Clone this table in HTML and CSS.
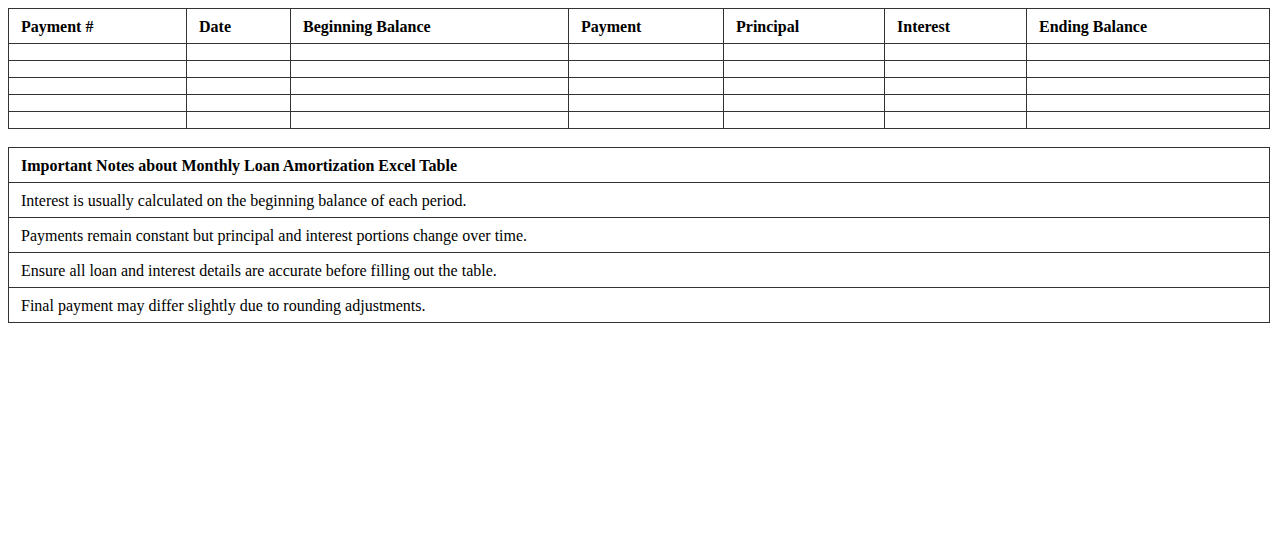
FILE: index.html
```html
<!DOCTYPE html>
<html>
<head>
<meta charset="utf-8">
<link rel="stylesheet" href="styles.css">
</head>
<body>
<table class="grid amort">
  <colgroup>
    <col class="c1"><col class="c2"><col class="c3"><col class="c4"><col class="c5"><col class="c6"><col class="c7">
  </colgroup>
  <thead>
    <tr><th>Payment #</th><th>Date</th><th>Beginning Balance</th><th>Payment</th><th>Principal</th><th>Interest</th><th>Ending Balance</th></tr>
  </thead>
  <tbody>
    <tr><td></td><td></td><td></td><td></td><td></td><td></td><td></td></tr>
    <tr><td></td><td></td><td></td><td></td><td></td><td></td><td></td></tr>
    <tr><td></td><td></td><td></td><td></td><td></td><td></td><td></td></tr>
    <tr><td></td><td></td><td></td><td></td><td></td><td></td><td></td></tr>
    <tr><td></td><td></td><td></td><td></td><td></td><td></td><td></td></tr>
  </tbody>
</table>
<table class="grid notes">
  <thead>
    <tr><th>Important Notes about Monthly Loan Amortization Excel Table</th></tr>
  </thead>
  <tbody>
    <tr><td>Interest is usually calculated on the beginning balance of each period.</td></tr>
    <tr><td>Payments remain constant but principal and interest portions change over time.</td></tr>
    <tr><td>Ensure all loan and interest details are accurate before filling out the table.</td></tr>
    <tr><td>Final payment may differ slightly due to rounding adjustments.</td></tr>
  </tbody>
</table>
</body>
</html>
```
FILE: styles.css
```css
body {
  margin: 8px;
  font-family: "Liberation Serif", "Times New Roman", serif;
  font-size: 16px;
  color: #000;
  background: #fff;
}
.grid {
  width: 1262px;
  border-collapse: collapse;
  table-layout: fixed;
}
.grid th,
.grid td {
  border: 1px solid #333;
  padding: 9px 12px 7px 12px;
  text-align: left;
  vertical-align: top;
}
.grid th {
  font-weight: bold;
}
.amort {
  margin-bottom: 18px;
}
.c1 { width: 178px; }
.c2 { width: 104px; }
.c3 { width: 278px; }
.c4 { width: 155px; }
.c5 { width: 161px; }
.c6 { width: 142px; }
.c7 { width: auto; }
```
